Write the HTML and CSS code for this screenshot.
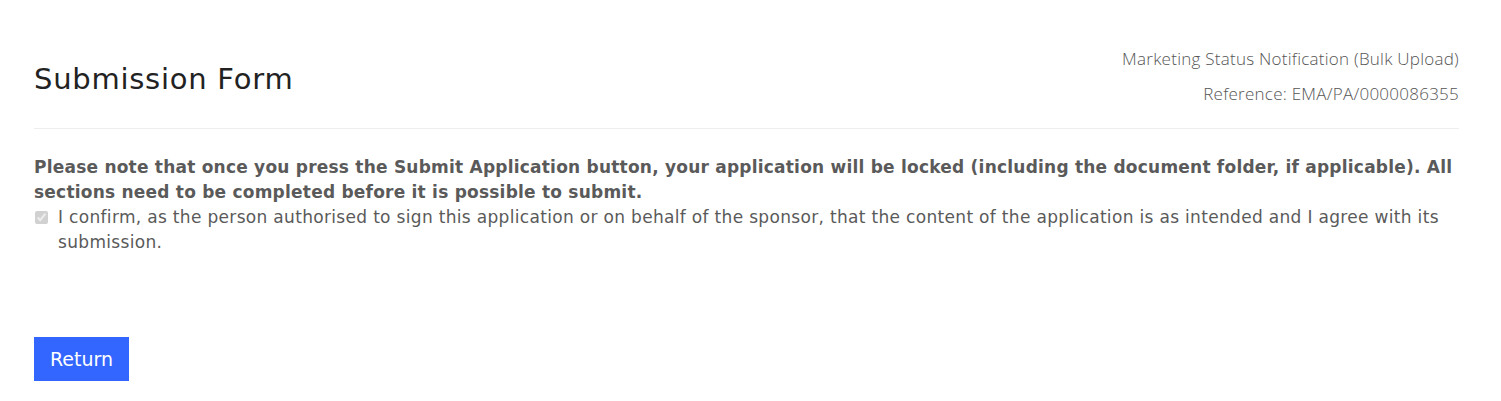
FILE: index.html
```html
<!DOCTYPE html>
<html lang="en">
<head>
<meta charset="utf-8">
<title>Submission Form</title>
<link rel="stylesheet" href="styles.css">
</head>
<body>
<div class="page">
  <header class="head">
    <h1 class="title">Submission Form</h1>
    <div class="meta">
      <div class="meta-line">Marketing Status Notification (Bulk Upload)</div>
      <div class="meta-line">Reference: EMA/PA/0000086355</div>
    </div>
  </header>
  <hr class="divider">
  <section class="body">
    <p class="note">Please note that once you press the Submit Application button, your application will be locked (including the document folder, if applicable). All sections need to be completed before it is possible to submit.</p>
    <label class="confirm"><input type="checkbox" class="chk" checked disabled><span class="confirm-text">I confirm, as the person authorised to sign this application or on behalf of the sponsor, that the content of the application is as intended and I agree with its submission.</span></label>
  </section>
  <div class="actions">
    <button class="btn" type="button">Return</button>
  </div>
</div>
</body>
</html>
```
FILE: styles.css
```css
html, body {
  margin: 0;
  padding: 0;
  background: #fff;
}
body {
  font-family: "DejaVu Sans", Verdana, sans-serif;
  color: #5a5a5a;
}
.page {
  padding: 41px 42px 0 34px;
}
.head {
  display: flex;
  justify-content: space-between;
  align-items: center;
  padding-bottom: 17px;
}
.title {
  margin: 5px 0 0;
  font-size: 29px;
  letter-spacing: 0.75px;
  font-weight: normal;
  color: #222;
}
.meta {
  text-align: right;
  font-family: "Open Sans", sans-serif;
  font-weight: 300;
  font-size: 17px;
  letter-spacing: 0.25px;
  color: #555;
  line-height: 35px;
}
.divider {
  border: 0;
  border-top: 1px solid #eee;
  margin: 0;
}
.body {
  padding-top: 26px;
  font-size: 17px;
  letter-spacing: 0.32px;
  line-height: 25px;
}
.note {
  margin: 0;
  font-weight: bold;
  letter-spacing: 0.22px;
}
.confirm {
  display: flex;
  align-items: flex-start;
  gap: 10px;
}
.chk {
  flex: none;
  margin: 6px 0 0 1px;
  width: 13px;
  height: 13px;
}
.confirm-text {
  flex: 1;
}
.actions {
  padding-top: 82px;
}
.btn {
  background: #3366ff;
  color: #fff;
  border: 0;
  border-radius: 0;
  font-family: "DejaVu Sans", Verdana, sans-serif;
  font-size: 19px;
  width: 95px;
  height: 44px;
  padding: 0;
}
```
